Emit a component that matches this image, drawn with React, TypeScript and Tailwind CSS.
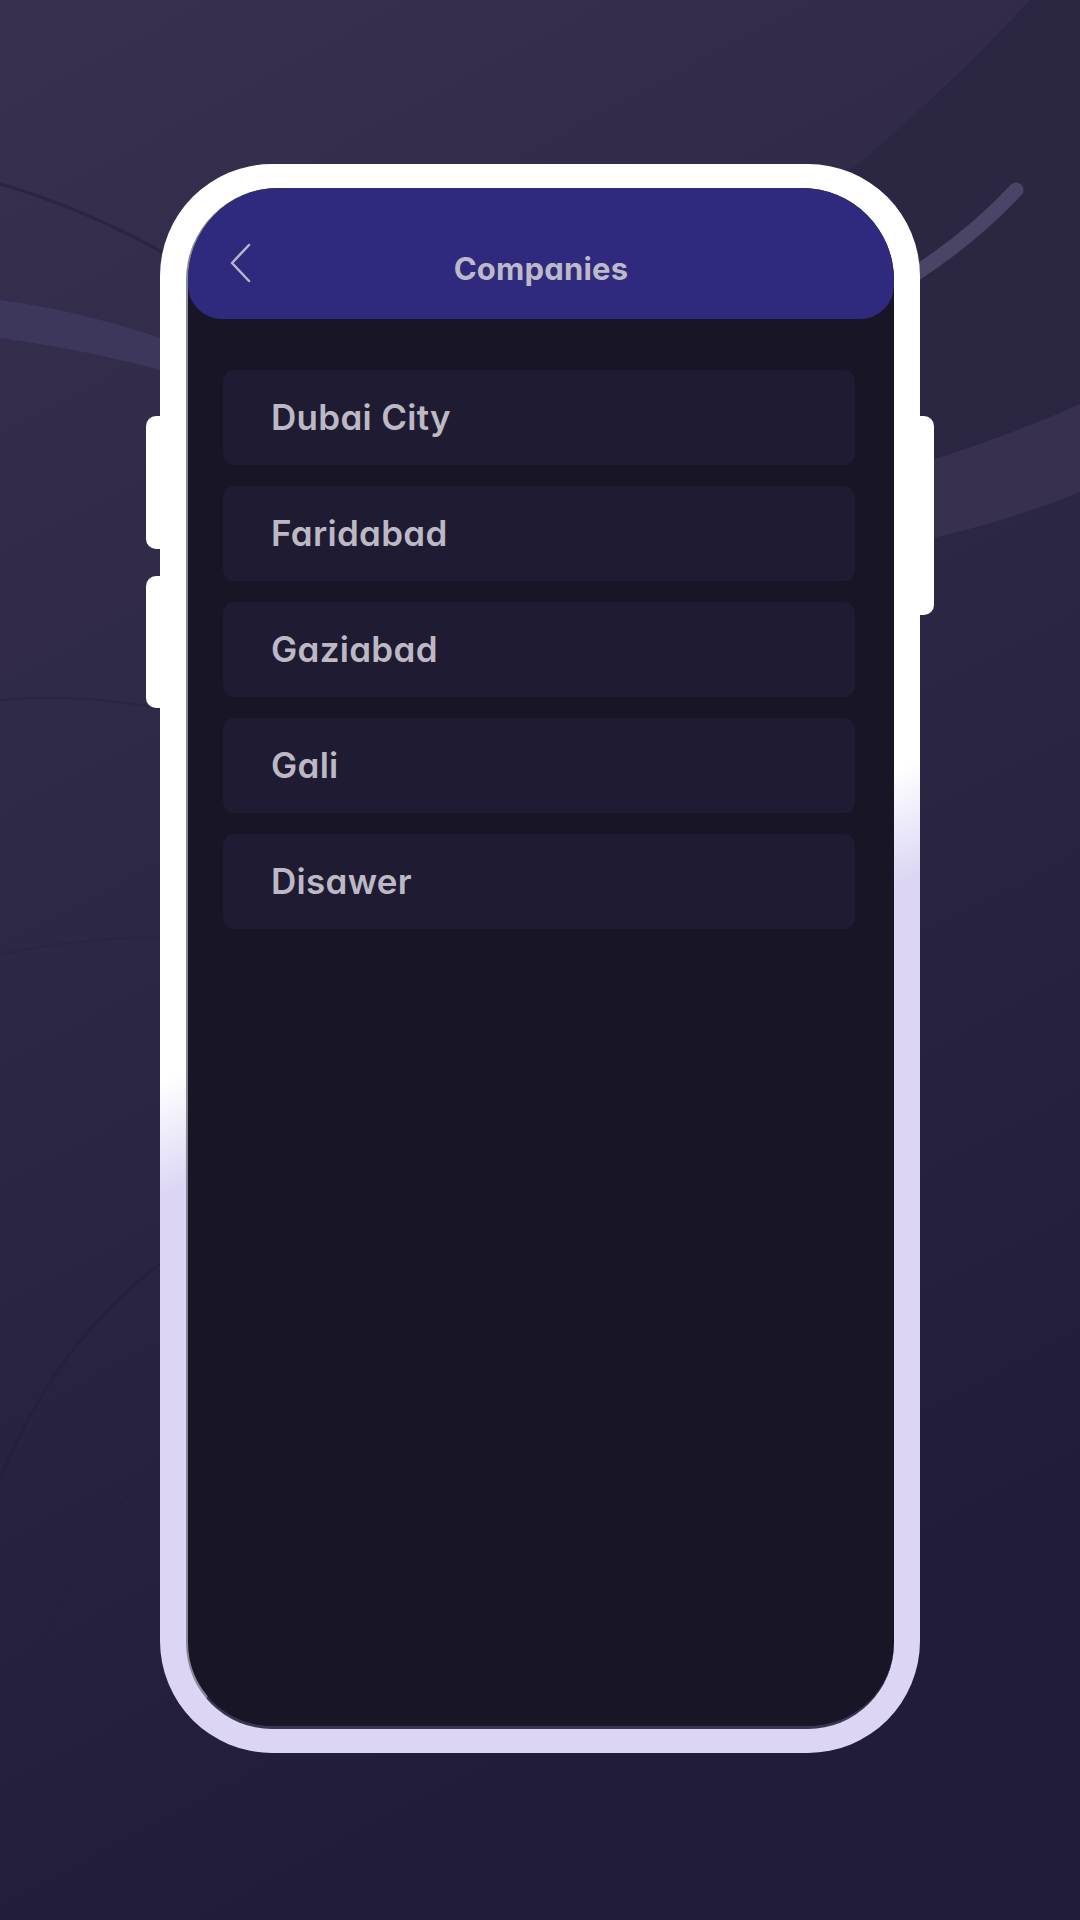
import React from 'react';

const companies = ['Dubai City', 'Faridabad', 'Gaziabad', 'Gali', 'Disawer'];

function Backdrop() {
  // decorative swooshes behind the phone
  return (
    <svg className="absolute inset-0 h-full w-full" viewBox="0 0 1080 1920" preserveAspectRatio="none">
      <defs>
        <linearGradient id="bg" x1="0" y1="0" x2="0.3" y2="1">
          <stop offset="0" stopColor="#38314f" />
          <stop offset="0.45" stopColor="#2d2846" />
          <stop offset="1" stopColor="#211c3a" />
        </linearGradient>
      </defs>
      <rect width="1080" height="1920" fill="url(#bg)" />
      <path d="M760 240 Q900 140 1030 0 L1080 0 L1080 404 Q1000 440 900 470 Z" fill="#2b2642" />
      <path d="M900 470 Q1000 440 1080 404 L1080 492 Q1000 525 900 545 Z" fill="#37304f" />
      <path d="M1016 190 Q960 250 880 295" stroke="#4a4466" strokeWidth="15" strokeLinecap="round" fill="none" />
      <path d="M0 300 Q90 312 180 345 L180 375 Q90 350 0 338 Z" fill="#3d375b" />
      <path d="M0 184 Q90 210 180 262" stroke="#2a2540" strokeWidth="3" fill="none" />
      <path d="M0 700 Q90 692 180 712" stroke="#2a2542" strokeWidth="2" fill="none" />
      <path d="M0 955 Q90 935 180 938" stroke="#2a2542" strokeWidth="2" fill="none" />
      <path d="M0 1480 Q60 1330 180 1250" stroke="#25203c" strokeWidth="2" fill="none" />
      <path d="M20 1700 Q80 1530 180 1440" stroke="#25203c" strokeWidth="2" fill="none" />
    </svg>
  );
}

function BackIcon() {
  return (
    <svg width="22" height="40" viewBox="0 0 22 40" fill="none">
      <polyline points="20,2 3,20 20,38" stroke="#b9b6cc" strokeWidth="2.5" strokeLinecap="round" strokeLinejoin="round" />
    </svg>
  );
}

export default function App() {
  return (
    <div
      className="relative h-[1920px] w-[1080px] overflow-hidden"
      style={{ fontFamily: 'Inter, "Noto Sans", sans-serif' }}
    >
      <Backdrop />

      <div className="relative flex justify-center pt-[164px]">
        {/* phone body */}
        <div className="relative h-[1589px] w-[760px] rounded-[112px] bg-[linear-gradient(157deg,#ffffff_48%,#dcd6f4_54%)] px-[26px] py-[24px]">
          {/* side keys */}
          <div className="absolute left-[-14px] top-[252px] h-[133px] w-[16px] rounded-l-[10px] bg-white" />
          <div className="absolute left-[-14px] top-[412px] h-[132px] w-[16px] rounded-l-[10px] bg-white" />
          <div className="absolute right-[-14px] top-[252px] h-[199px] w-[16px] rounded-r-[10px] bg-white" />

          {/* screen */}
          <div className="flex h-full flex-col overflow-hidden rounded-t-[92px] rounded-b-[86px] border-l-2 border-[#8a8799] bg-[#181527] [border-bottom:3px_solid_#3a3552]">
            <header className="grid h-[131px] shrink-0 grid-cols-[1fr_auto_1fr] items-center rounded-b-[34px] bg-[#302a7e] px-[41px] pt-[32px]">
              <div className="mb-[14px] flex items-center">
                <BackIcon />
              </div>
              <h1 className="text-[31px] font-bold tracking-[0.2px] text-[#bdbac8] [font-feature-settings:'cv11']">
                Companies
              </h1>
              <div />
            </header>

            <ul className="flex flex-col gap-[21px] pl-[35px] pr-[39px] pt-[51px]">
              {companies.map((name) => (
                <li
                  key={name}
                  className="flex h-[95px] items-center rounded-[11px] bg-[#1f1b32] pl-[48px] text-[35px] font-semibold tracking-[0.3px] text-[#bcb9c5] [font-feature-settings:'cv11']"
                >
                  {name}
                </li>
              ))}
            </ul>
          </div>
        </div>
      </div>
    </div>
  );
}
